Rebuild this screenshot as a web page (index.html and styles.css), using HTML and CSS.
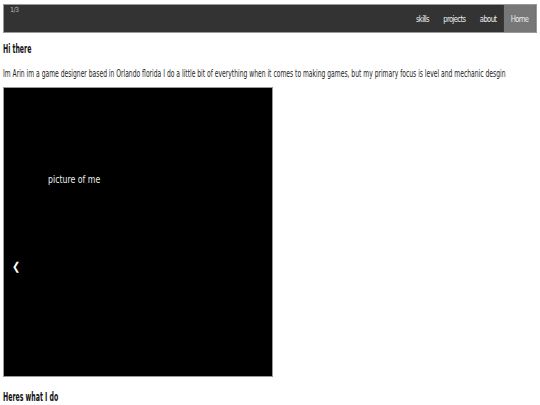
FILE: index.html
```html
<!DOCTYPE html>
<html lang="en">
<head>
  <meta charset="UTF-8" />
  <meta name="viewport" content="width=device-width, initial-scale=1.0" />
  <title>Arin - Game Designer</title>
  <link rel="stylesheet" href="styles.css">
</head>
<body>
  <nav class="topnav">
    <span class="numbertext">1 / 3</span>
    <div class="links">
      <a href="#skills">skills</a>
      <a href="#projects">projects</a>
      <a href="#about">about</a>
      <a href="#home" class="active">Home</a>
    </div>
  </nav>

  <h2 class="title">Hi there</h2>
  <p class="intro">Im Arin im a game designer based in Orlando florida I do a little bit of everything when it comes to making games, but my primary focus is level and mechanic desgin</p>

  <div class="slideshow">
    <div class="slide">
      <p class="caption">picture of me</p>
    </div>
    <a class="prev">&#10094;</a>
  </div>

  <h2 class="title">Heres what I do</h2>
</body>
</html>
```

FILE: styles.css
```css
body {
  font-family: "DejaVu Sans Condensed", "DejaVu Sans", sans-serif;
  font-stretch: condensed;
  background-color: #ffffff;
  color: #111;
  margin: 0;
  padding: 4px 3px;
}
.topnav {
  position: relative;
  background-color: #333;
  border: 1px solid #999;
  height: 27px;
  display: flex;
  justify-content: flex-end;
  align-items: stretch;
}
/* the original face is a narrow one, so the text is squeezed sideways */
.links {
  display: flex;
  transform: scaleX(0.8);
  transform-origin: right center;
}
.topnav a {
  color: #eee;
  text-decoration: none;
  font-size: 9.5px;
  letter-spacing: -0.8px;
  padding: 0 9px;
  display: flex;
  align-items: center;
}
.topnav a.active {
  background-color: #777;
  padding: 0 9px;
}
.numbertext {
  position: absolute;
  top: 1px;
  left: 6px;
  color: #bbb;
  font-size: 7px;
  letter-spacing: -0.3px;
  word-spacing: -2px;
}
.title, .intro, .caption {
  transform-origin: left center;
  white-space: nowrap;
}
.title {
  font-size: 11.5px;
  margin: 9px 0 0;
  font-weight: bold;
  transform: scaleX(0.6);
}
.intro {
  font-size: 10px;
  margin: 12px 0 0;
  color: #222;
  transform: scaleX(0.67);
}
.slideshow {
  position: relative;
  width: 268px;
  height: 288px;
  background: #000;
  border: 1px solid #999;
  margin: 8px 0 13px;
}
.caption {
  color: #eee;
  font-size: 11px;
  margin: 85px 0 0 44px;
  transform: scaleX(0.79);
}
.prev {
  position: absolute;
  left: 8px;
  top: 172px;
  color: #fff;
  font-size: 11px;
}
```
